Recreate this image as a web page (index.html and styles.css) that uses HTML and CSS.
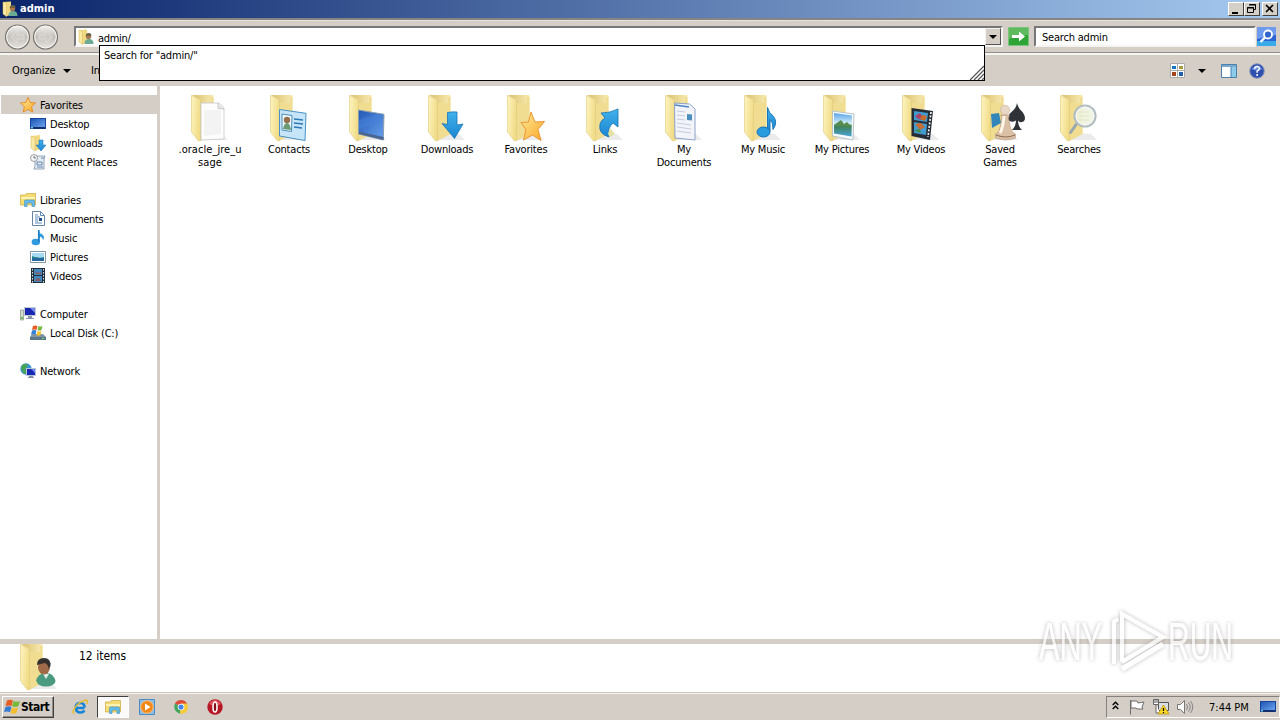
FILE: index.html
```html
<!DOCTYPE html>
<html lang="en">
<head>
<meta charset="utf-8">
<title>admin</title>
<link rel="stylesheet" href="styles.css">
</head>
<body>
<svg class="defs" width="0" height="0">
  <defs>
    <linearGradient id="gFront" x1="0" x2="1" y1="0" y2="0.3"><stop offset="0" stop-color="#fdf4c0"/><stop offset="1" stop-color="#f1dc88"/></linearGradient>
    <linearGradient id="gBack" x1="0" x2="1"><stop offset="0" stop-color="#dcc06c"/><stop offset="1" stop-color="#f7ebb2"/></linearGradient>
    <linearGradient id="gBlue" x1="0" x2="1" y1="0" y2="1"><stop offset="0" stop-color="#2257b4"/><stop offset="1" stop-color="#68a2ee"/></linearGradient>
    <linearGradient id="gSky" x1="0" x2="0" y1="0" y2="1"><stop offset="0" stop-color="#3fb2ea"/><stop offset="1" stop-color="#1c85d2"/></linearGradient>
    <linearGradient id="gStar" x1="0" x2="1" y1="0" y2="1"><stop offset="0" stop-color="#ffec9a"/><stop offset="1" stop-color="#f9a528"/></linearGradient>
    <linearGradient id="gPic" x1="0" x2="0" y1="0" y2="1"><stop offset="0" stop-color="#57a5e8"/><stop offset=".45" stop-color="#d5eefa"/><stop offset=".55" stop-color="#3d8052"/><stop offset="1" stop-color="#4aa4d8"/></linearGradient>
    <linearGradient id="gNav" x1="0" x2="0" y1="0" y2="1"><stop offset="0" stop-color="#f4f3f0"/><stop offset=".5" stop-color="#c3c0ba"/><stop offset="1" stop-color="#e8e6e2"/></linearGradient>
    <filter id="glow" x="-20%" y="-20%" width="140%" height="140%"><feDropShadow dx="0" dy="0" stdDeviation="2" flood-color="#666" flood-opacity=".65"/></filter>
  </defs>
  <symbol id="folder" viewBox="0 0 48 48">
    <path d="M14 46L42 46 36 40 14 38z" fill="#ddd" opacity=".6"/>
    <path d="M6 1H26.500Q27.500 1 27.500 2V40L14 47V6z" fill="url(#gBack)"/>
    <path d="M14 9h11v-6h2.500V40L14 47z" fill="#f0dd92"/>
    <path d="M5.500 1.500L13 5.500Q14.500 6.500 14.500 8V46.500L12.500 47 5.500 38z" fill="url(#gFront)" stroke="#dfc978" stroke-width=".6"/>
  </symbol>
  <symbol id="person" viewBox="0 0 48 48">
    <ellipse cx="31" cy="38" rx="9.500" ry="5.500" fill="#4a9a80"/><path d="M21 38q2-8 10-8t9 8" fill="#4a9a80"/><path d="M28 31l3 5 3-5z" fill="#e3efe8"/>
    <ellipse cx="29" cy="24" rx="6" ry="7.500" fill="#a06a48"/><path d="M22 22q0-7 7-7t6.500 8l-2 3q0-5-4-6z" fill="#33302e"/>
  </symbol>
  <symbol id="user" viewBox="0 0 16 16">
    <path d="M1 1l8-.5v13l-5 2z" fill="#efda83"/><path d="M1 1l3.500 1.500v13L1 13z" fill="#fbeaa4" stroke="#d3b75b" stroke-width=".5"/>
    <path d="M6.500 15q0-5 4.500-5t4.500 5z" fill="#6bab93"/><circle cx="10.500" cy="7.500" r="2.700" fill="#a87a50"/><path d="M7.700 7q0-3 3-3t2.600 3z" fill="#6f6344"/>
  </symbol>
  <symbol id="note" viewBox="0 0 16 16"><path d="M8 0q1 3 4.500 4.500 2.500 2.500 .5 6 0-3-3-4v5.500z" fill="url(#gSky)"/><ellipse cx="5.800" cy="12" rx="4.200" ry="3.200" fill="#2f9be0"/><path d="M8.800 0v12" stroke="#1e7fc4" stroke-width="1.700"/></symbol>
  <symbol id="monitor" viewBox="0 0 16 16"><path d="M0 2h16v11H0z" fill="#17469f"/><path d="M1 3h14v8H1z" fill="url(#gBlue)"/><path d="M1 11h14v2H1z" fill="#13306e"/><path d="M1 11h2v1.500H1z" fill="#6cd"/></symbol>
  <symbol id="library" viewBox="0 0 16 16"><path d="M.5 3h5l1-1.500h9V13H.5z" fill="#f4dc72" stroke="#cda83d" stroke-width=".7"/><path d="M1 5h14v2H1z" fill="#fff3b4"/><path d="M4.500 14.500V9q0-1 1-1h8q1 0 1 1v5.500h-2.500V11H7v3.500z" fill="#69bde9" stroke="#3b8bc0" stroke-width=".6"/></symbol>
  <symbol id="star" viewBox="0 0 16 16"><path d="M8 .5l2.200 4.900 5.300.6-3.900 3.600 1.100 5.400L8 12.300 3.300 15l1.100-5.400L.5 6l5.300-.6z" fill="url(#gStar)" stroke="#e8871b" stroke-width=".9"/></symbol>
  <symbol id="smallfolder" viewBox="0 0 16 16"><path d="M1 1l9-1v14l-5 2z" fill="#efda83"/><path d="M1 1l4 2v13l-4-3z" fill="#fbeaa4" stroke="#d3b75b" stroke-width=".5"/></symbol>
</svg>

<div class="titlebar">
  <svg class="i16"><use href="#user"/></svg>
  <span class="title">admin</span>
  <div class="winbtns">
    <button class="wb"><svg width="16" height="14"><path d="M4 10h6v2H4z"/></svg></button>
    <button class="wb"><svg width="16" height="14"><path d="M5.500 2.500h6v5h-2M5 3h7M3.500 5.500h6v5h-6zM3 6h7" fill="none" stroke="#000"/></svg></button>
    <button class="wb last"><svg width="16" height="14"><path d="M4 3l7 7M11 3l-7 7" stroke="#000" stroke-width="1.600"/></svg></button>
  </div>
</div>

<div class="addressrow">
  <svg class="nav" width="56" height="28" viewBox="0 0 56 28">
    <g fill="url(#gNav)" stroke="#77746f" stroke-width="1.200"><circle cx="13.500" cy="14" r="12"/><circle cx="41.500" cy="14" r="12"/></g>
    <g fill="none" stroke="#f6f5f2" stroke-width="1"><circle cx="13.500" cy="14" r="10.800"/><circle cx="41.500" cy="14" r="10.800"/></g>
    <path d="M7 14l6-6v4h7v4h-7v4zM48 14l-6-6v4h-7v4h7v4z" fill="#cfccc6" stroke="#dedbd6"/>
  </svg>
  <div class="address">
    <svg class="i16"><use href="#user"/></svg>
    <span class="path">admin/</span>
    <div class="drop"><i class="caret"></i></div>
    <div class="suggest"><span>Search for "admin/"</span>
      <svg class="grip" width="15" height="15"><path d="M1 15L15 1M5 15L15 5M9 15l6-6M13 15l2-2" stroke="#555" stroke-width="1.200"/></svg>
    </div>
  </div>
  <svg class="go" width="21" height="19"><path d="M0 0h21v19H0z" fill="#7cc47e"/><path d="M1 1h19v17H1z" fill="#2fa436"/><path d="M1 1h19v7Q10 8 1 12z" fill="#5dbb5d"/><path d="M4 8h7V4.500l6 5-6 5V11H4z" fill="#fff"/></svg>
  <div class="search"><span>Search admin</span></div>
  <svg class="go" width="19" height="19"><path d="M0 0h19v19H0z" fill="#2c62d4"/><path d="M0 0h19v8L0 12z" fill="#6f9bee"/><path d="M0 14h19v5H0z" fill="#39a9e8"/><circle cx="11" cy="7.500" r="4" fill="#3364cc" stroke="#fff" stroke-width="1.800"/><path d="M8 10.500l-4.500 4.500" stroke="#fff" stroke-width="2.400"/></svg>
</div>

<div class="toolbar">
  <span class="organize">Organize</span><i class="caret big"></i><span class="include">In</span>
  <div class="tools">
    <svg width="16" height="16"><g fill="#fff" stroke="#aaa"><path d="M.5.500h7v7h-7zM7.500.500h7v7h-7zM.5 7.500h7v7h-7zM7.500 7.500h7v7h-7z"/></g><path d="M2 3h4v3H2z" fill="#1875c5"/><path d="M9 3h4v3H9z" fill="#a89a3c"/><path d="M2 9h4v4H2z" fill="#a3431d"/><path d="M9 9h4v4H9z" fill="#265ea6"/></svg>
    <i class="caret big"></i>
    <svg class="pane" width="16" height="14"><path d="M.5.5h15v13H.5z" fill="#fff" stroke="#4c7faa"/><path d="M10 1h5v12h-5z" fill="#8dcbe9"/><path d="M1 1h14v2H1z" fill="#78a9ce"/><path d="M10 3v10" stroke="#4c7faa"/></svg>
    <svg class="help" width="16" height="16"><circle cx="8" cy="8" r="7.300" fill="#2f4fae" stroke="#8f9cc0"/><path d="M2.500 6Q8-1 13.500 6 8 9 2.500 6z" fill="#678ee0"/><path d="M5.700 6q.1-2.500 2.400-2.500t2.300 2.100Q10.400 7 8.100 8.200v1.600" fill="none" stroke="#fff" stroke-width="1.500"/><circle cx="8.100" cy="12" r="1" fill="#fff"/></svg>
  </div>
</div>

<div class="main">
  <div class="tree">
    <div class="row sel"><svg class="i16"><use href="#star"/></svg><span>Favorites</span></div>
    <div class="row sub"><svg class="i16"><use href="#monitor"/></svg><span>Desktop</span></div>
    <div class="row sub"><svg class="i16" viewBox="0 0 16 16"><use href="#smallfolder"/><path d="M9 5h4v5h3l-5 6-5-6h3z" fill="url(#gSky)" stroke="#176bad" stroke-width=".5"/></svg><span>Downloads</span></div>
    <div class="row sub"><svg class="i16" viewBox="0 0 16 16"><path d="M5 2h10l-1 3v10H4l1-3z" fill="#e4edf6" stroke="#7c8fa6" stroke-width=".8"/><path d="M7 8h5v3H7zM11 4h3M7 13h6" fill="none" stroke="#6688ac"/><circle cx="4" cy="4" r="3.500" fill="#f4f6f8" stroke="#888" stroke-width=".8"/><path d="M4 2v2h2" fill="none" stroke="#555" stroke-width=".8"/></svg><span class="wide">Recent Places</span></div>
    <div class="row gap"></div>
    <div class="row"><svg class="i16"><use href="#library"/></svg><span>Libraries</span></div>
    <div class="row sub"><svg class="i16" viewBox="0 0 16 16"><path d="M2.500.5h8l4 4v10h-12z" fill="#fff" stroke="#6784a6"/><path d="M10.500.5v4h4M5 4h3M5 6h5M5 8h3M5 10h3M5 12h7" fill="none" stroke="#5d8bc0"/><path d="M9 7h3v3H9z" fill="#244d8e"/></svg><span class="tight">Documents</span></div>
    <div class="row sub"><svg class="i16"><use href="#note"/></svg><span>Music</span></div>
    <div class="row sub"><svg class="i16" viewBox="0 0 16 16"><path d="M.5 2.500h15v11H.5z" fill="#fff" stroke="#8296a8"/><path d="M2 4h12v8H2z" fill="#a8d9f2"/><path d="M2 7q6 3 12 1v4H2z" fill="#248a94"/><path d="M2 9h12v3H2z" fill="#25689f"/><path d="M2 9q6-1 7 0z" fill="#26734b"/></svg><span class="wide">Pictures</span></div>
    <div class="row sub"><svg class="i16" viewBox="0 0 16 16"><path d="M1 0h14v15H1z" fill="#222e3a"/><path d="M4 1h8v6H4zM4 8h8v6H4z" fill="#4288be"/><path d="M5 3l3 2 3-1v2H6zM6 11l3-1 2 3H5z" fill="#8a5b62"/><path d="M2.500 1v14M13.500 1v14" stroke="#dce8f0" stroke-dasharray="1.500 1.500"/></svg><span>Videos</span></div>
    <div class="row gap"></div>
    <div class="row"><svg class="i16" viewBox="0 0 16 16"><path d="M.5 4h3v10h-3z" fill="#d3dbd2" stroke="#879387" stroke-width=".7"/><path d="M1 11h2v2H1z" fill="#69bf49"/><path d="M4 1h12v9H4z" fill="#c3cbd8"/><path d="M5 2h10v7H5z" fill="#1a27b0"/><path d="M10 2h5v5z" fill="#7289eb"/><path d="M8 10h4v2h2v1H6v-1h2z" fill="#8a98ad"/></svg><span>Computer</span></div>
    <div class="row sub"><svg class="i16" viewBox="0 0 16 16"><path d="M2 9h11l3 3v3H0v-3z" fill="#8095a5"/><path d="M0 12h16v3H0z" fill="#5e7787"/><path d="M12 13h2v1h-2z" fill="#62e85a"/><path d="M3 1q2.500-1 4.500 0l-1 4q-2-1-4.500 0z" fill="#e75b25"/><path d="M8.500 1q2 1 4 0l-1 4q-2 1-4 0z" fill="#73b83a"/><path d="M2 5.500q2-1 4.500 0l-1 4q-2-1-4.500 0z" fill="#3382d9"/><path d="M7.500 6q2 1 4 0l-1 4q-2 1-4 0z" fill="#f5c42c"/></svg><span>Local Disk (C:)</span></div>
    <div class="row gap"></div>
    <div class="row"><svg class="i16" viewBox="0 0 16 16"><circle cx="6" cy="6" r="5.700" fill="#3b93d0"/><path d="M2 2q4-2 6 0L5 6l2 3-2 2Q0 8 2 2z" fill="#48a44e"/><path d="M6 5h10v8H6z" fill="#b9c6da"/><path d="M7 6h8v6H7z" fill="#1729b4"/><path d="M11 6h4v4z" fill="#6d86ec"/><path d="M9 13h4v1h1v1H8v-1h1z" fill="#8290a8"/></svg><span>Network</span></div>
  </div>

  <div class="files">
    <div class="file"><svg class="i48" viewBox="0 0 48 48"><use href="#folder"/><path d="M15 9l18 0 5 5V45l-23 1z" fill="#fdfdfd" stroke="#c6c6c6" stroke-width=".8"/><path d="M32 9v5.500l6 .5" fill="#e6e6e6" stroke="#bbb" stroke-width=".7"/><path d="M18 16h17v24l-17 2z" fill="#f3f3f3"/></svg><span class="wider">.oracle_jre_u<br>sage</span></div>
    <div class="file"><svg class="i48" viewBox="0 0 48 48"><use href="#folder"/><path d="M14.500 15.500L41 19.300 40 46.500 14.500 42z" fill="#c6e5f8" stroke="#4a92c6"/><path d="M17 20l10 1.500-.5 16L17 36z" fill="#eef8fd" stroke="#4a8eb8"/><circle cx="22" cy="26" r="3.200" fill="#94714c"/><path d="M18 35q1-6 4-6t4 7z" fill="#6b9a75"/><path d="M29 25l9 1M29 29l9 1M29 33l8 1" stroke="#2d78b4" stroke-width="1.300"/></svg><span>Contacts</span></div>
    <div class="file"><svg class="i48" viewBox="0 0 48 48"><use href="#folder"/><path d="M14.500 16L40 20.300 39.300 46 14.500 40z" fill="url(#gBlue)" stroke="#8b9eae"/><path d="M15 37.500l24.500 5.500V46L15 40z" fill="#4a6690"/><path d="M15 26l18-6 6 1-1 6-23 8z" fill="#4a84dc" opacity=".45"/></svg><span>Desktop</span></div>
    <div class="file"><svg class="i48" viewBox="0 0 48 48"><use href="#folder"/><path d="M24.500 18.500q5-1 9.500-.5V31l6-1-8.500 14.500L19 29.500l5.500 1z" fill="url(#gSky)" stroke="#1975b8" stroke-width=".8"/></svg><span>Downloads</span></div>
    <div class="file"><svg class="i48" viewBox="0 0 48 48"><use href="#folder"/><path d="M29 18l4 10 9.500-.5-6.500 8 3 11-8.500-5.500-9 5 2.500-10.500-5-7 7.500-.500z" fill="url(#gStar)" stroke="#eb9632"/></svg><span>Favorites</span></div>
    <div class="file"><svg class="i48" viewBox="0 0 48 48"><use href="#folder"/><path d="M20 19q9 0 17-4v18l-5-4q-6 5-4 14Q17 40 19 30q1-4 5-6z" fill="url(#gSky)" stroke="#1671b2" stroke-width=".8"/><path d="M29 34l5 6-5 3-2-3z" fill="#e3e2a4"/></svg><span>Links</span></div>
    <div class="file"><svg class="i48" viewBox="0 0 48 48"><use href="#folder"/><path d="M14.500 9l15 1 5.500 5v31l-20-2z" fill="#f2f4fa" stroke="#8da2cb"/><path d="M15 11l14 2" stroke="#4e87c9" stroke-width="1.500"/><path d="M17 17l8 1M17 21l8 1M17 25l8 1M17 29l14 2M17 33l14 2M17 37l14 2" stroke="#c5cce0"/><path d="M27 20l5 .5v6l-5-.5z" fill="#4b8fbc"/></svg><span>My<br>Documents</span></div>
    <div class="file"><svg class="i48" viewBox="0 0 48 48"><use href="#folder"/><path d="M28.500 13.500q1 5 6 9 4.500 6-.5 13 .5-7-3-10v12h-2.500z" fill="url(#gSky)" stroke="#1873b7"/><ellipse cx="24.500" cy="38" rx="6.500" ry="5" fill="#279bdf" stroke="#1873b7"/></svg><span>My Music</span></div>
    <div class="file"><svg class="i48" viewBox="0 0 48 48"><use href="#folder"/><path d="M14.500 17L36 20l-1 26-20.500-4z" fill="#f7fbfd" stroke="#b7c4c8"/><path d="M16 19l18 2.500-.5 21L16 39.500z" fill="url(#gPic)"/><path d="M16 31l7-5 3 4 3-2 5 5z" fill="#558c4d"/></svg><span>My Pictures</span></div>
    <div class="file"><svg class="i48" viewBox="0 0 48 48"><use href="#folder"/><path d="M14.500 14L36 17l-3 29-18.500-4z" fill="#252c35"/><path d="M17 17l14 2-1 9-13-2zM17 28l13 2-1 11-12-2z" fill="#419bd0"/><path d="M18 22l5-3 5 7-7-1z" fill="#a94269"/><path d="M25 21l5 1-2 5-5-2z" fill="#ca6b2b"/><path d="M18 30l6-1 4 4-5 3z" fill="#c86c36"/><path d="M18 36l5-1 1 4-6-2z" fill="#438e4d"/><path d="M34 18l-3 25" stroke="#edf1f2" stroke-width="1.700" stroke-dasharray="2 1.500"/></svg><span>My Videos</span></div>
    <div class="file"><svg class="i48" viewBox="0 0 48 48"><use href="#folder"/><path d="M15 20l8-1 2 10-9 5z" fill="#3286ba"/><path d="M41 9q1 5 5.500 9 4.500 6 1 9.500-4 2-5.500-1 0 6 4 9.500H36q4-4 4-9.500-5 3-8-1-1-4 4-8 4-3 5-8.500z" fill="#2f3237"/><circle cx="29" cy="16" r="4.700" fill="#e9d8c5" stroke="#c0a48a" stroke-width=".5"/><path d="M24.500 21h9l-1 3q1 9 4 14l3 2v4q-10 4-20 0v-4l3-2q3-7 3-14z" fill="#dac0a5" stroke="#ab8b71" stroke-width=".5"/><path d="M28 22q-1 12-4 17" fill="none" stroke="#fff6e9" stroke-width="3"/><path d="M20 41q10 4 19 0" fill="none" stroke="#8e6c55"/></svg><span>Saved<br>Games</span></div>
    <div class="file"><svg class="i48" viewBox="0 0 48 48"><use href="#folder"/><path d="M21.500 30l-6 8.500" stroke="#98a6ad" stroke-width="3" stroke-linecap="round"/><circle cx="30" cy="22" r="10.500" fill="#edf2e0" fill-opacity=".88" stroke="#b2bdc1" stroke-width="2.200"/><circle cx="30" cy="22" r="9" fill="none" stroke="#f7faf9"/><path d="M24 18h10M24 22h10M24 26h10" stroke="#e2e6c4"/></svg><span>Searches</span></div>
  </div>
</div>

<div class="details">
  <svg class="i48" viewBox="0 0 48 48"><use href="#folder"/><use href="#person" width="48" height="48"/></svg>
  <span>12 items</span>
</div>

<div class="taskbar">
  <button class="start"><svg width="17" height="16" viewBox="0 0 17 16"><path d="M3 1.500q3-1.500 6 0L7.500 7q-3-1-6 0z" fill="#e75b25"/><path d="M9.500 2q3 1.500 6.500 0l-1.500 5q-3 2-6.500 0z" fill="#78b83c"/><path d="M1.500 8q3-1.500 6 0L6 13q-3-1-6 0z" fill="#337bd1"/><path d="M8 8.500q3 1.500 6 0L12.500 14q-3 1.500-6 0z" fill="#f3bd2e"/></svg><span>Start</span></button>
  <div class="quick">
    <svg width="16" height="16"><path d="M12.500 9H4M4 9q0 4.500 4.500 4.500 2.500 0 4-2M3.500 8.500Q4 4 8.300 4t4.200 4.500" fill="none" stroke="#1685d6" stroke-width="2.600"/><path d="M2.500 14.500Q-.5 14 3 8.500T14 1q2.500 0 .5 4" fill="none" stroke="#e7bc32" stroke-width="1.500"/></svg>
    <div class="active"><svg class="i16"><use href="#library"/></svg></div>
    <svg width="16" height="16"><path d="M.5.5h15v15H.5z" fill="#8fbce0" stroke="#478bc8"/><circle cx="8" cy="8" r="6.300" fill="#f38717" stroke="#fac37b"/><path d="M6 4.500l5.500 3.500L6 11.500z" fill="#fff"/></svg>
    <svg width="14" height="14" viewBox="0 0 16 16"><path d="M8 8L1 4Q3 0 8 0t7 4.500z" fill="#df493a"/><path d="M8 8L1 4q-3 8 6 12z" fill="#40a65b"/><path d="M8 8h-1l0 8q9 0 9-8 0-2-1-4H8z" fill="#f5ca3b"/><circle cx="8" cy="8" r="3.800" fill="#fff"/><circle cx="8" cy="8" r="2.900" fill="#4384ed"/></svg>
    <svg width="16" height="16"><circle cx="8" cy="8" r="7.700" fill="#b71624"/><path d="M2 5Q8-3 14 5 8 8 2 5z" fill="#df5660"/><ellipse cx="8" cy="8" rx="2" ry="5" fill="#85101a" stroke="#fff" stroke-width="1.600"/></svg>
  </div>
  <div class="tray">
    <svg class="chev" width="7" height="9"><path d="M.7 4l2.800-2.800L6.300 4M.7 8l2.800-2.800L6.300 8" fill="none" stroke="#000" stroke-width="1.400"/></svg>
    <svg class="flag" width="16" height="16"><path d="M1.500 1v14.500M2 2h6l1 2 6-1-2 5 1 2H8L7 9H2z" fill="#fff" stroke="#6d6d6d"/></svg>
    <svg width="16" height="16"><path d="M5.500 3.500h10v8h-10z" fill="#d9dee0" stroke="#555"/><path d="M.5.500h5v5h-5zM3 5v9h4" fill="#fff" stroke="#666"/><path d="M2 1v3M4 1v3" stroke="#555"/><path d="M10.500 6l5.500 9H5z" fill="#ffda24" stroke="#b98c09" stroke-width=".7"/><path d="M10.500 9v3M10.500 13v1.200" stroke="#000" stroke-width="1.300"/></svg>
    <svg width="17" height="16"><path d="M.5 5.500h3l4-4v13l-4-4h-3z" fill="#fff" stroke="#777"/><path d="M9.500 5q2 3 0 6M11.500 3.500q3.500 4.500 0 9M13.500 2q4.500 6 0 12" fill="none" stroke="#858585"/></svg>
    <span class="clock">7:44 PM</span>
    <svg class="i16"><use href="#monitor"/></svg>
  </div>
</div>

<svg class="watermark" width="210" height="76" viewBox="0 0 210 76">
  <g filter="url(#glow)" fill="#fff" opacity=".72">
    <text x="9" y="57" textLength="63" lengthAdjust="spacingAndGlyphs">ANY</text>
    <text x="138" y="57" textLength="65" lengthAdjust="spacingAndGlyphs">RUN</text>
    <g fill="none" stroke="#fff" stroke-width="4">
      <path d="M92 59V11l41 23-41 25"/>
      <path d="M88 16l-4 2.500V61"/>
      <path d="M92 66l41-25" stroke-width="5"/>
    </g>
  </g>
</svg>
</body>
</html>
```
FILE: styles.css
```css
* { box-sizing: border-box; }
body {
  margin: 0; width: 1280px; height: 720px; overflow: hidden; position: relative;
  display: flex; flex-direction: column; background: #fff; color: #000;
  font: 11px/13px "DejaVu Sans Condensed", "DejaVu Sans", sans-serif;
  letter-spacing: -0.2px;
}
svg { display: block; flex: none; overflow: visible; }
span { white-space: nowrap; }
button { font: inherit; color: inherit; letter-spacing: inherit; padding: 0; margin: 0; }
.defs { position: absolute; }
.i16 { width: 16px; height: 16px; }
.i48 { width: 48px; height: 48px; }
.wide { letter-spacing: -.1px; }
.wider { letter-spacing: .05px; }
.tight { letter-spacing: -.35px; }

.titlebar {
  height: 18px; flex: none; display: flex; align-items: center; padding: 0 2px;
  background: linear-gradient(90deg, #0a246a, #a6caf0); color: #fff;
}
.title { font-weight: bold; margin: -1px 0 0 2px; letter-spacing: 0; }
.winbtns { margin-left: auto; display: flex; }
.wb {
  width: 16px; height: 14px; background: #d4d0c8; border: 1px solid;
  border-color: #fff #404040 #404040 #fff; display: flex; align-items: center; justify-content: center;
}
.wb.last { margin-left: 2px; }

.addressrow {
  height: 37px; flex: none; display: flex; align-items: center; background: #d4cec6;
  border-top: 2px solid #878581; border-bottom: 2px solid #f7f6f3;
  padding: 0 2px 0 4px; box-shadow: inset 0 -1px #918e89, inset 0 1px #e6e3df;
}
.address {
  width: 929px; height: 21px; margin-left: 14px; background: #fff; position: relative;
  border: 2px solid; border-color: #777 #f5f4f0 #f5f4f0 #777;
  display: flex; align-items: center; padding-left: 2px;
}
.path { margin-left: 4px; padding-top: 4px; letter-spacing: -.3px; }
.drop {
  width: 16px; height: 17px; margin-left: auto; background: #d4cec6; border: 1px solid;
  border-color: #f5f3ef #555 #555 #f5f3ef; display: flex; align-items: center; justify-content: center;
}
.caret { width: 0; height: 0; border: 4px solid transparent; border-top-color: #000; border-bottom: 0; }
.suggest {
  position: absolute; z-index: 2; left: 23px; top: 17px; width: 886px; height: 36px;
  border: 1px solid #000; background: #fff; padding: 3px 4px;
}
.grip { position: absolute; right: 0; bottom: 0; }
.go { margin-left: 5px; }
.search {
  width: 222px; height: 21px; margin-left: 5px; background: #fff; display: flex; align-items: center;
  border: 2px solid; border-color: #777 #f5f4f0 #f5f4f0 #777; padding: 1px 0 0 6px;
}
.search + .go { margin-left: 1px; }

.toolbar { height: 31px; flex: none; background: #d4cec6; display: flex; align-items: center; padding: 0 15px 0 12px; }
.organize { width: 51px; letter-spacing: -.1px; }
.include { margin-left: 20px; }
.tools { margin-left: auto; display: flex; align-items: center; }
.tools .caret { margin-left: 12px; }
.pane { margin-left: 15px; }
.help { margin-left: 12px; }

.main { height: 553px; flex: none; display: flex; }
.tree { width: 160px; flex: none; border-right: 3px solid #d4cec6; padding: 9px 0 0 1px; }
.row { height: 19px; display: flex; align-items: center; padding-left: 19px; }
.row span { margin-left: 4px; padding-top: 1px; }
.row.sub { padding-left: 29px; }
.row.sel { background: #d4cec6; }
.files { display: grid; grid-template-columns: repeat(12, 79px); align-content: start; padding: 8px 0 0 10px; }
.file { display: flex; flex-direction: column; align-items: center; text-align: center; }
.file span { margin-top: 1px; padding-left: 1px; }

.details { height: 53px; flex: none; border-top: 5px solid #d4cec6; display: flex; padding-left: 15px; }
.details .i48 { margin-top: -1px; }
.details span { margin: 6px 0 0 16px; font-size: 12px; letter-spacing: 0; }

.taskbar {
  height: 28px; flex: none; background: #d4cec6; border-top: 1px solid #c9c4bb;
  box-shadow: inset 0 1px #f8f7f4; display: flex; align-items: center; padding: 1px 0 0 2px;
}
.start {
  width: 52px; height: 22px; background: #d4cec6; border: 1px solid; border-color: #fff #404040 #404040 #fff;
  box-shadow: inset -1px -1px #908d87; display: flex; align-items: center; padding-left: 1px;
}
.start span { font-weight: bold; font-size: 12px; letter-spacing: -.5px; }
.quick { display: flex; align-items: center; margin-left: 18px; }
.active {
  width: 32px; height: 22px; margin: 0 10px 0 9px; background: #fbfaf8; border: 1px solid;
  border-color: #404040 #fff #fff #404040; display: flex; align-items: center; justify-content: center;
}
.quick svg:nth-child(4) { margin: 0 19px; }
.tray {
  margin-left: auto; width: 174px; height: 22px; border: 1px solid; border-color: #85827d #fff #fff #85827d;
  display: flex; align-items: center; padding-left: 5px;
}
.chev { margin-top: -3px; }
.flag { margin: 0 8px 0 10px; }
.tray svg:nth-child(4) { margin-left: 8px; }
.clock { margin-left: 15px; width: 51px; letter-spacing: 0; }

.watermark { position: absolute; left: 1030px; top: 603px; }
.watermark text { font: 53px "Liberation Sans", Arial, sans-serif; letter-spacing: 0; }
```
